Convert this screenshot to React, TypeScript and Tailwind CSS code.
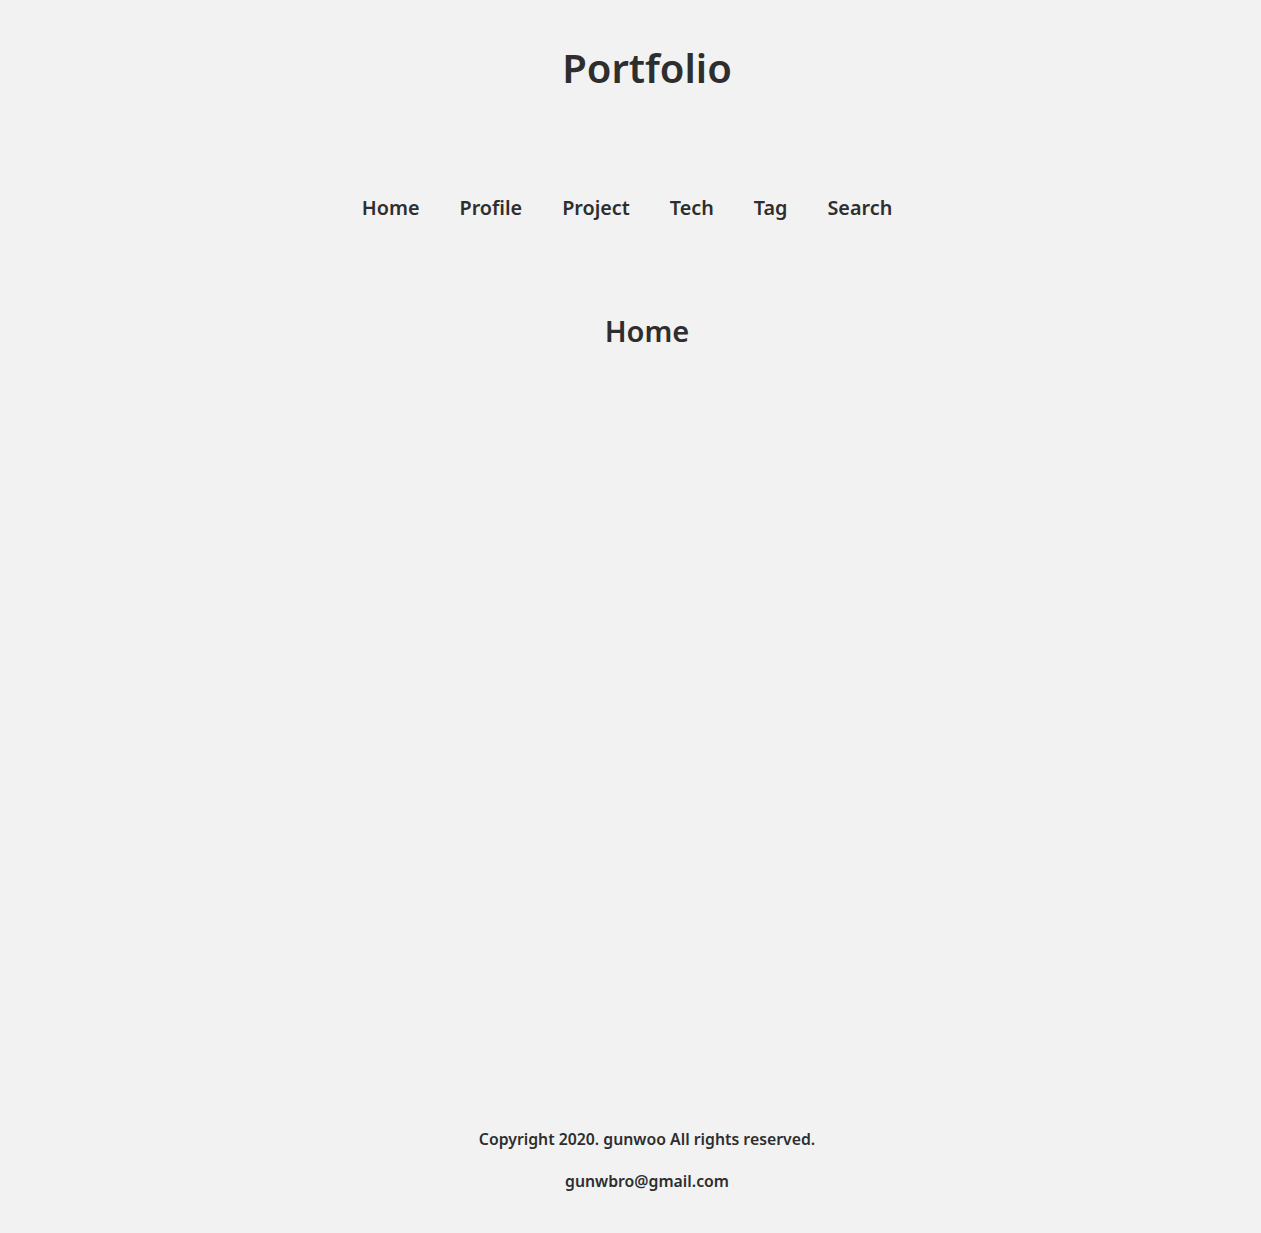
const navItems = ['Home', 'Profile', 'Project', 'Tech', 'Tag', 'Search']

export default function App() {
  return (
    <div
      className="min-h-screen bg-[#f2f2f2] text-[#2e2e2e] flex flex-col pl-[33px]"
      style={{ fontFamily: '"Noto Sans", "Noto Sans CJK KR", sans-serif' }}
    >
      {/* header */}
      <header className="flex flex-col items-center">
        <h1 className="mt-[40px] text-[40px] leading-[56px] font-semibold">Portfolio</h1>
        <nav className="mt-[98px]">
          <ul className="flex">
            {navItems.map((item) => (
              <li key={item} className="mr-10 text-[19.8px] leading-[28px] font-semibold">
                {item}
              </li>
            ))}
          </ul>
        </nav>
      </header>

      {/* main */}
      <main className="flex-1 flex flex-col items-center">
        <h2 className="mt-[89px] text-[29px] leading-[40px] font-semibold">Home</h2>
      </main>

      {/* footer */}
      <footer className="flex flex-col items-center gap-[18px] pb-[40px] text-[15.8px] leading-[24px] font-semibold">
        <p>Copyright 2020. gunwoo All rights reserved.</p>
        <p>gunwbro@gmail.com</p>
      </footer>
    </div>
  )
}
